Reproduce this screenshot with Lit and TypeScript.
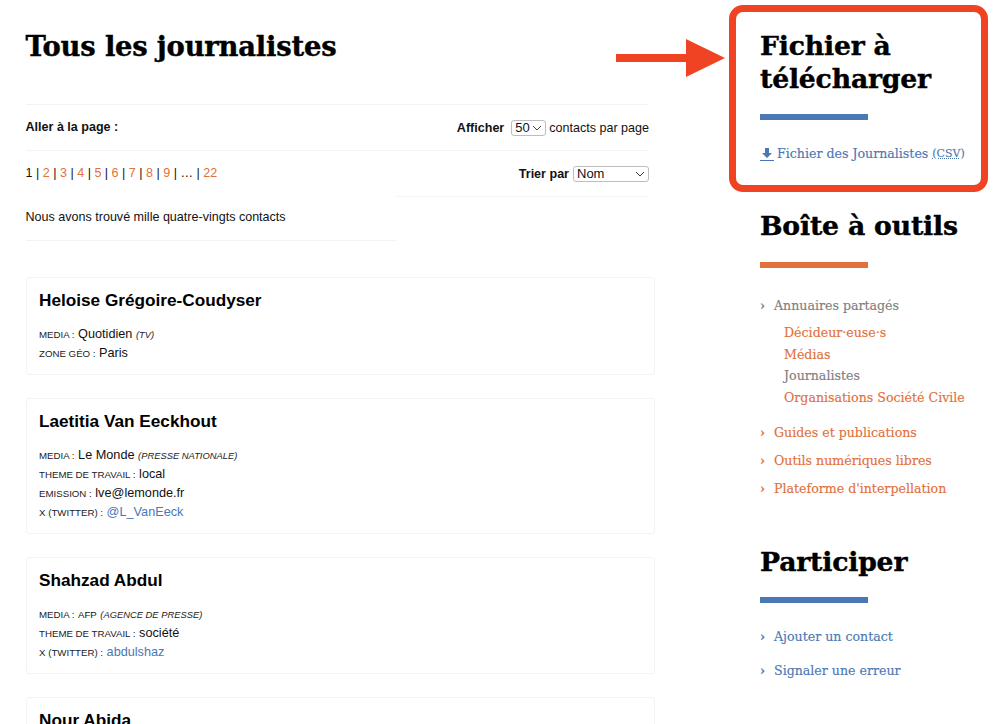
import { LitElement, html, css, svg } from "lit";
import { customElement } from "lit/decorators.js";

interface Field { label: string; value: string; note?: string; link?: boolean; small?: boolean }
interface Contact { name: string; fields: Field[] }

const contacts: Contact[] = [
  { name: "Heloise Grégoire-Coudyser", fields: [
    { label: "Media", value: "Quotidien", note: "(TV)" },
    { label: "Zone géo", value: "Paris" },
  ]},
  { name: "Laetitia Van Eeckhout", fields: [
    { label: "Media", value: "Le Monde", note: "(Presse Nationale)" },
    { label: "Theme de travail", value: "local" },
    { label: "Emission", value: "lve@lemonde.fr" },
    { label: "X (Twitter)", value: "@L_VanEeck", link: true },
  ]},
  { name: "Shahzad Abdul", fields: [
    { label: "Media", value: "AFP", note: "(Agence de presse)", small: true },
    { label: "Theme de travail", value: "société" },
    { label: "X (Twitter)", value: "abdulshaz", link: true },
  ]},
  { name: "Nour Abida", fields: [] },
];

const pages = ["2", "3", "4", "5", "6", "7", "8", "9"];

@customElement("contact-card")
export class ContactCard extends LitElement {
  static properties = { contact: { attribute: false } };
  contact!: Contact;
  static styles = css`
    :host { display: block; }
    .card { border: 1px solid #f3f3f3; border-radius: 3px; padding: 10.5px 12px 11px 12.5px; }
    h2 { margin: 0 0 14.5px; font: bold 17.2px/22px "Liberation Sans", sans-serif; color: #000; }
    .row { font: 12.7px/19px "Liberation Sans", sans-serif; color: #111; }
    .label { font-size: 9.7px; text-transform: uppercase; color: #222; }
    .note { font-size: 9.4px; font-style: italic; text-transform: uppercase; color: #222; }
    .small { font-size: 9.6px; }
    a { color: #4b78b5; text-decoration: none; }
  `;
  render() {
    const c = this.contact;
    return html`<div class="card">
      <h2>${c.name}</h2>
      ${c.fields.map((f) => html`<div class="row">
        <span class="label">${f.label} :</span>
        ${f.link ? html`<a href="#">${f.value}</a>` : html`<span class=${f.small ? "small" : ""}>${f.value}</span>`}
        ${f.note ? html`<span class="note">${f.note}</span>` : ""}
      </div>`)}
    </div>`;
  }
}

@customElement("app-root")
export class AppRoot extends LitElement {
  static styles = css`
    :host { display: block; position: relative; width: 1000px; height: 724px; overflow: hidden; background: #fff; font-family: "Liberation Sans", sans-serif; color: #111; }
    .page { display: flex; align-items: flex-start; }
    main { width: 629.5px; margin-left: 25.5px; flex: none; }
    h1 { margin: 0; padding-top: 27px; height: 104px; box-sizing: border-box; font: bold 27.4px/38px "DejaVu Serif", serif; color: #000; letter-spacing: -0.2px; -webkit-text-stroke: 0.4px #000; }
    .tools { width: 623.5px; display: flex; border-top: 1px solid #f3f3f3; font-size: 12.55px; }
    .left { width: 371.5px; flex: none; }
    .right { flex: 1; }
    .cell { height: 45px; box-sizing: border-box; display: flex; align-items: center; }
    .cell + .cell { border-top: 1px solid #f3f3f3; }
    .right .cell { justify-content: flex-end; gap: 3px; }
    .right .last { border-bottom: 1px solid #f3f3f3; height: 47px; gap: 4px; }
    .left .go { padding-bottom: 2px; }
    .left .found { border-bottom: 1px solid #f3f3f3; height: 45px; border-top: none; padding-bottom: 2px; }
    .left .pager { border-top: 1px solid #f3f3f3; height: 46px; padding-bottom: 1px; }
    b { font-weight: bold; }
    .pager a { color: #e2703a; text-decoration: none; }
    .pick { box-sizing: border-box; display: inline-flex; align-items: center; justify-content: space-between; height: 16px; border: 1px solid #bdbdbd; border-radius: 3px; padding: 0 3px; font-size: 13px; background: #fff; }
    .pick.n { width: 35px; margin-left: 4px; }
    .pick.s { width: 76px; }
    .cards { display: flex; flex-direction: column; gap: 23px; margin-top: 36px; }
    aside { margin-left: 105px; width: 230px; flex: none; padding-top: 29px; }
    h3 { margin: 0; font: bold 26.7px/33px "DejaVu Serif", serif; color: #000; letter-spacing: -0.2px; -webkit-text-stroke: 0.4px #000; white-space: nowrap; }
    .rule { width: 108px; height: 6px; margin-top: 19px; }
    .blue { background: #4b78b5; }
    .orange { background: #e2703a; margin-top: 20px; }
    .dl { display: flex; align-items: center; gap: 3px; margin-top: 26px; font: 12.6px/16px "DejaVu Serif", serif; color: #4b78b5; height: 16px; white-space: nowrap; -webkit-text-stroke: 0.15px #4b78b5; }
    abbr { font-size: 11px; text-decoration: underline dotted; margin-left: 1px; }
    .box { margin-bottom: 48px; height: 132px; }
    ul { list-style: none; margin: 0; padding: 0; font: 12.6px/22px "DejaVu Serif", serif; white-space: nowrap; -webkit-text-stroke: 0.15px currentColor; }
    .tree { margin-top: 27px; }
    .item { display: flex; gap: 10px; }
    .item::before { content: "›"; width: 4px; font-weight: bold; }
    .tree .item { color: #e2703a; margin-top: 6px; }
    .tree .item.cur { color: #808080; margin-top: 0; }
    .tree .subs { margin: 5px 0 13px 24px; color: #e2703a; line-height: 21.7px; }
    .subs .cur { color: #808080; }
    .join { margin-top: 23px; }
    .join .item { color: #4b78b5; margin-bottom: 12px; }
    .sec2 { margin-top: 45px; }
    .mark { position: absolute; left: 729px; top: 5px; width: 259px; height: 187px; box-sizing: border-box; border: 7px solid #f04323; border-radius: 14px; pointer-events: none; }
    .arrow { position: absolute; left: 615px; top: 38px; }
  `;
  render() {
    return html`<div class="page">
      <main>
        <h1>Tous les journalistes</h1>
        <div class="tools">
          <div class="left">
            <div class="cell go"><b>Aller à la page :</b></div>
            <div class="cell pager"><span>1 | ${pages.map((p) => html`<a href="#">${p}</a> | `)}… | <a href="#">22</a></span></div>
            <div class="cell found">Nous avons trouvé mille quatre-vingts contacts</div>
          </div>
          <div class="right">
            <div class="cell"><b>Afficher</b><span class="pick n">50 ${this.chev()}</span><span>contacts par page</span></div>
            <div class="cell last"><b>Trier par</b><span class="pick s">Nom ${this.chev()}</span></div>
          </div>
        </div>
        <div class="cards">
          ${contacts.map((c) => html`<contact-card .contact=${c}></contact-card>`)}
        </div>
      </main>
      <aside>
        <section class="box">
          <h3>Fichier à<br />télécharger</h3>
          <div class="rule blue"></div>
          <div class="dl">
            <svg width="14" height="14" viewBox="0 0 14 14"><path d="M5 1h4v5h3L7 11 2 6h3zM0 13h14v1H0z" fill="#4b78b5"/></svg>
            <span>Fichier des Journalistes</span><abbr>(CSV)</abbr>
          </div>
        </section>
        <section>
          <h3>Boîte à outils</h3>
          <div class="rule orange"></div>
          <ul class="tree">
            <li class="item cur">Annuaires partagés</li>
            <li><ul class="subs">
              <li>Décideur·euse·s</li><li>Médias</li><li class="cur">Journalistes</li><li>Organisations Société Civile</li>
            </ul></li>
            <li class="item">Guides et publications</li>
            <li class="item">Outils numériques libres</li>
            <li class="item">Plateforme d'interpellation</li>
          </ul>
        </section>
        <section class="sec2">
          <h3>Participer</h3>
          <div class="rule blue"></div>
          <ul class="join">
            <li class="item">Ajouter un contact</li>
            <li class="item">Signaler une erreur</li>
          </ul>
        </section>
      </aside>
    </div>
    <div class="mark"></div>
    <svg class="arrow" width="110" height="40" viewBox="0 0 110 40"><path d="M1 16h70V1l39 19-39 19V24H1z" fill="#f04323"/></svg>`;
  }
  chev() {
    return svg`<svg width="10" height="6" viewBox="0 0 10 6" style="display:block"><path d="M1 1l4 4 4-4" fill="none" stroke="#444" stroke-width="1"/></svg>`;
  }
}
